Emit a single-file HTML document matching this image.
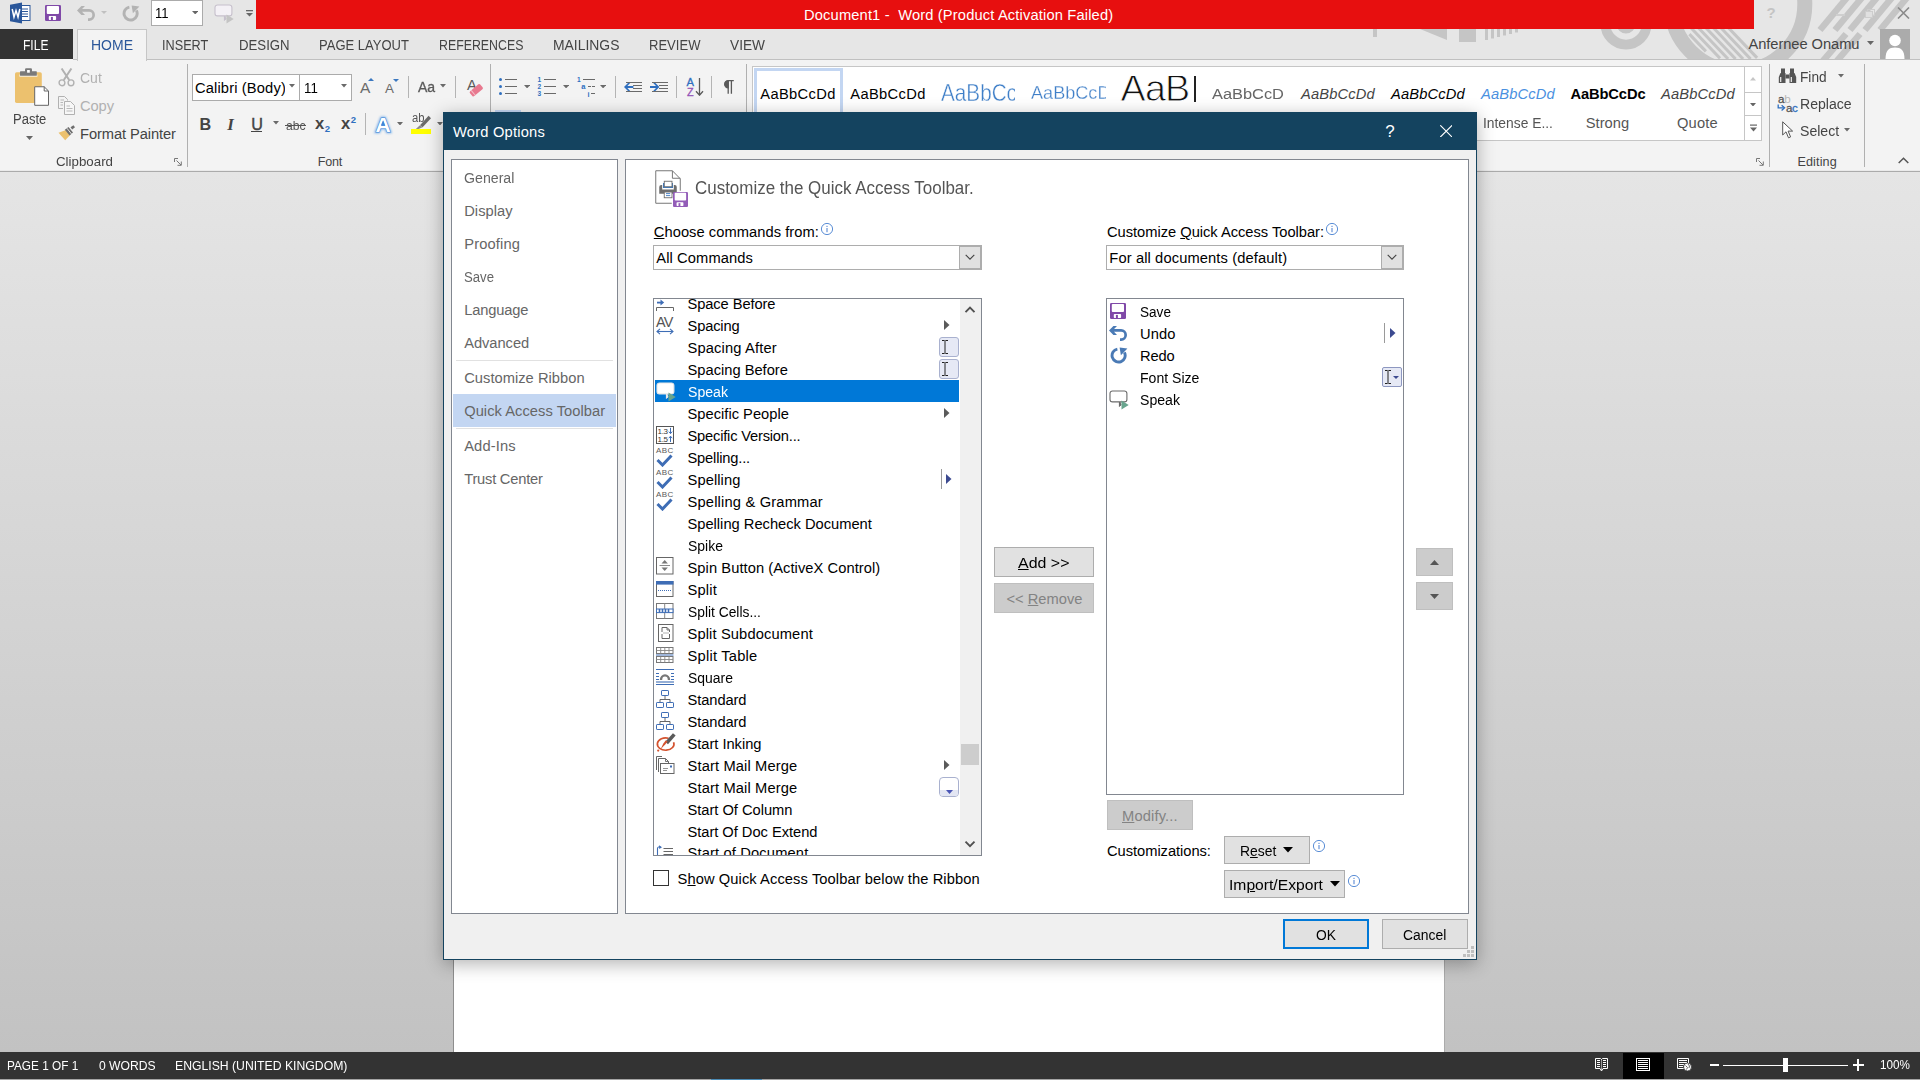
<!DOCTYPE html>
<html><head><meta charset="utf-8"><title>Word Options</title><style>
html,body{margin:0;padding:0;}
body{width:1920px;height:1080px;position:relative;overflow:hidden;background:#c6c6c6;font-family:"Liberation Sans",sans-serif;}
div,span.t,svg{position:absolute;}
span.t{line-height:1;white-space:pre;}
u{text-decoration:underline;text-underline-offset:1px;}
</style></head><body>
<div style="left:0px;top:0px;width:1920px;height:60px;background:#e6e6e6;"></div>
<svg style="left:0;top:0;" width="1920" height="59" viewBox="0 0 1920 59"><g fill="none" stroke="#c5c5c5"><circle cx="1626" cy="24" r="20.6" stroke-width="9.8"/><circle cx="1626" cy="24" r="7" stroke-width="5"/><circle cx="1738" cy="4.3" r="66.8" stroke-width="15"/></g><g stroke="#c5c5c5" stroke-width="3"><line x1="1689.4" y1="34.1" x2="1705.9" y2="51.4"/><line x1="1683.5" y1="20.0" x2="1720.0" y2="58.3"/><line x1="1691.0" y1="20.0" x2="1728.1" y2="59.0"/><line x1="1698.5" y1="20.0" x2="1735.6" y2="59.0"/><line x1="1706.0" y1="20.0" x2="1743.1" y2="59.0"/><line x1="1713.5" y1="20.0" x2="1750.6" y2="59.0"/><line x1="1721.0" y1="20.0" x2="1757.1" y2="57.9"/></g><g stroke="#c5c5c5" stroke-width="6.5"><line x1="1820" y1="30" x2="1850" y2="-6"/><line x1="1835" y1="30" x2="1865" y2="-6"/><line x1="1850" y1="30" x2="1880" y2="-6"/><line x1="1865" y1="30" x2="1895" y2="-6"/><line x1="1880" y1="30" x2="1910" y2="-6"/><line x1="1822" y1="62" x2="1846" y2="34"/><line x1="1836" y1="62" x2="1860" y2="34"/></g><g fill="#c5c5c5"><rect x="1373" y="28" width="4" height="9"/><path d="M1420 29H1447V40Z"/><rect x="1459" y="29" width="17" height="13"/><rect x="1485" y="29" width="3" height="11.0"/><rect x="1491" y="29" width="3" height="9.5"/><rect x="1497" y="29" width="3" height="8.0"/><rect x="1503" y="29" width="3" height="6.5"/><rect x="1509" y="29" width="3" height="5.0"/><rect x="1515" y="29" width="3" height="3.5"/></g></svg>
<div style="left:256px;top:0px;width:1498px;height:29px;background:#e70f0f;"></div>
<span class="t" style="left:804.00px;top:8.16px;font-size:14.7px;color:#fff;letter-spacing:0.148px;">Document1 -  Word (Product Activation Failed)</span>
<div style="left:73px;top:59px;width:1847px;height:1px;background:#c0c0c0;"></div>
<div style="left:0px;top:59px;width:73px;height:1px;background:#f3f3f3;"></div>
<div style="left:0px;top:60px;width:1920px;height:111px;background:#f3f3f3;"></div>
<div style="left:0px;top:172px;width:1920px;height:880px;background:linear-gradient(#e5e5e5,#c2c2c2);"></div>
<div style="left:0px;top:170px;width:1920px;height:1px;background:#eaeaea;"></div>
<div style="left:0px;top:171px;width:1920px;height:1px;background:#ababab;"></div>
<div style="left:0px;top:29px;width:73px;height:30px;background:#333;"></div>
<span class="t" style="left:23.30px;top:38.16px;font-size:14.7px;color:#fff;transform:scaleX(0.8214);transform-origin:0 0;">FILE</span>
<div style="left:77px;top:29px;width:70px;height:32px;background:#f3f3f3;border:1px solid #c6c6c6;box-sizing:border-box;border-bottom:none;"></div>
<span class="t" style="left:90.50px;top:38.16px;font-size:14.7px;color:#2b579a;transform:scaleX(0.9524);transform-origin:0 0;">HOME</span>
<span class="t" style="left:162.00px;top:38.16px;font-size:14.7px;color:#444;transform:scaleX(0.8631);transform-origin:0 0;">INSERT</span>
<span class="t" style="left:238.80px;top:38.16px;font-size:14.7px;color:#444;transform:scaleX(0.8996);transform-origin:0 0;">DESIGN</span>
<span class="t" style="left:319.30px;top:38.16px;font-size:14.7px;color:#444;transform:scaleX(0.8861);transform-origin:0 0;">PAGE LAYOUT</span>
<span class="t" style="left:439.30px;top:38.16px;font-size:14.7px;color:#444;transform:scaleX(0.8410);transform-origin:0 0;">REFERENCES</span>
<span class="t" style="left:553.00px;top:38.16px;font-size:14.7px;color:#444;transform:scaleX(0.9466);transform-origin:0 0;">MAILINGS</span>
<span class="t" style="left:649.30px;top:38.16px;font-size:14.7px;color:#444;transform:scaleX(0.8881);transform-origin:0 0;">REVIEW</span>
<span class="t" style="left:730.00px;top:38.16px;font-size:14.7px;color:#444;transform:scaleX(0.9316);transform-origin:0 0;">VIEW</span>
<span class="t" style="left:1748.50px;top:37.16px;font-size:14.7px;color:#444;letter-spacing:-0.068px;">Anfernee Onamu</span>
<svg style="left:1866.5px;top:41.0px;" width="7" height="4" viewBox="0 0 7 4"><path d="M0 0H7L3.5 4Z" fill="#666"/></svg>
<div style="left:1880px;top:29px;width:30px;height:30px;background:#ababab;"></div>
<svg style="left:1880px;top:30px;" width="30" height="29" viewBox="0 0 30 29"><circle cx="15" cy="10.5" r="5.8" fill="#fff"/><path d="M5.5 29C5.5 20 9 17.5 15 17.5S24.5 20 24.5 29Z" fill="#fff"/></svg>
<svg style="left:9px;top:2px;" width="22" height="22" viewBox="0 0 22 22"><rect x="9" y="3.5" width="12" height="15" fill="#fff" stroke="#2b579a" stroke-width="1"/><path d="M12 7H19M12 9.5H19M12 12H19M12 14.5H19" stroke="#2b579a" stroke-width="1"/><path d="M1 2.8L13 0.6V21.4L1 19.2Z" fill="#2b579a"/><path d="M3.2 7L5 15L7 8.6L9 15L10.8 7" stroke="#fff" stroke-width="1.5" fill="none"/></svg>
<svg style="left:45px;top:5px;" width="16" height="16" viewBox="0 0 16 16"><rect x="0" y="0" width="16" height="16" rx="1.2" fill="#8049a8"/><rect x="1.8" y="0.9" width="12.2" height="8.1" rx="0.9" fill="#fff"/><rect x="3.8" y="10.9" width="7.3" height="4.1" rx="0.8" fill="#fff"/><rect x="5.9" y="11.9" width="2" height="4.1" fill="#8049a8"/></svg>
<svg style="left:77px;top:6px;" width="18" height="15" viewBox="0 0 18 15"><path d="M5 4.45H12.1A4.55 4.55 0 0 1 12.1 13.55H11" stroke="#b3b3b3" stroke-width="2.7" fill="none"/><path d="M0 4.45L4.4 0H8L5 3.1V5.8L8 8.9H4.4Z" fill="#b3b3b3"/></svg>
<svg style="left:101.3px;top:10.8px;" width="6" height="3" viewBox="0 0 6 3"><path d="M0 0H6L3.0 3Z" fill="#c0c0c0"/></svg>
<svg style="left:122px;top:4.5px;" width="18" height="17" viewBox="0 0 18 17"><path d="M7.36 2.05A6.55 6.55 0 1 0 14.4 5.4" stroke="#b3b3b3" stroke-width="2.9" fill="none"/><path d="M9.6 0.6L17.4 1.5L10.9 8.2Z" fill="#b3b3b3"/></svg>
<div style="left:151px;top:0px;width:52px;height:26px;background:#fff;border:1px solid #ababab;box-sizing:border-box;"></div>
<span class="t" style="left:155.00px;top:6.26px;font-size:14.7px;color:#000;transform:scaleX(0.8912);transform-origin:0 0;">11</span>
<svg style="left:191.8px;top:10.9px;" width="6.4" height="3.4" viewBox="0 0 6.4 3.4"><path d="M0 0H6.4L3.2 3.4Z" fill="#666"/></svg>
<svg style="left:213.5px;top:3.5px;" width="20" height="20" viewBox="0 0 20 20"><path d="M3.5 1H15.4A2.5 2.5 0 0 1 17.9 3.5V9.4A2.5 2.5 0 0 1 15.4 11.9H10.5V15.8L11.9 14.7L10.5 11.9H3.5A2.5 2.5 0 0 1 1 9.4V3.5A2.5 2.5 0 0 1 3.5 1Z" fill="#f4f1f6" stroke="#c6c0cc" stroke-width="1.1"/><path d="M10.5 11.9V15.8L11.9 14.9" fill="none" stroke="#c6c0cc" stroke-width="1.1"/><path d="M12.5 10.4L19.7 15L12.5 19.6Z" fill="#c4c4c4"/></svg>
<svg style="left:246px;top:9px;" width="7" height="8" viewBox="0 0 7 8"><rect x="0" y="1" width="7" height="1.3" fill="#666"/><path d="M0 4H7L3.5 7.5Z" fill="#666"/></svg>
<span class="t" style="left:1766.50px;top:5.30px;font-size:15px;color:#c4c4c4;font-weight:bold;">?</span>
<div style="left:1836px;top:14px;width:9px;height:1.5px;background:#cfcfcf;"></div>
<div style="left:1867px;top:9px;width:8px;height:7px;border:1.5px solid #cdcdcd;box-sizing:border-box;"></div>
<div style="left:1865px;top:11px;width:8px;height:7px;background:#e0e0e0;border:1.5px solid #cdcdcd;box-sizing:border-box;"></div>
<svg style="left:1897px;top:7px;" width="13" height="12" viewBox="0 0 13 12"><path d="M1 0.5L12 11.5M12 0.5L1 11.5" stroke="#8a8a8a" stroke-width="1.6" fill="none"/></svg>
<div style="left:187px;top:64px;width:1px;height:103px;background:#b0b0b0;"></div>
<div style="left:490px;top:64px;width:1px;height:103px;background:#b0b0b0;"></div>
<div style="left:746px;top:64px;width:1px;height:103px;background:#b0b0b0;"></div>
<div style="left:1769px;top:64px;width:1px;height:103px;background:#b0b0b0;"></div>
<div style="left:1864px;top:64px;width:1px;height:103px;background:#b0b0b0;"></div>
<svg style="left:14px;top:68px;" width="36" height="39" viewBox="0 0 36 39"><rect x="1" y="4.3" width="26.8" height="30.6" rx="1.6" fill="#ecc16e"/><rect x="5.4" y="6.5" width="18" height="2.2" fill="#f8f3e8"/><rect x="6" y="3.25" width="16.8" height="4.6" rx="0.6" fill="#7a7a7a"/><rect x="11" y="0.2" width="7" height="5" rx="1.2" fill="#7a7a7a"/><rect x="13.1" y="2" width="2.7" height="2.7" fill="#fff"/><path d="M20.7 18.75H30.2L34.5 23V37.3H20.7Z" fill="#fff" stroke="#666" stroke-width="1"/><path d="M30.2 18.75V23H34.5" fill="none" stroke="#666" stroke-width="1"/></svg>
<span class="t" style="left:12.50px;top:111.91px;font-size:14.7px;color:#444;transform:scaleX(0.8859);transform-origin:0 0;">Paste</span>
<svg style="left:25.5px;top:135.5px;" width="7" height="4" viewBox="0 0 7 4"><path d="M0 0H7L3.5 4Z" fill="#666"/></svg>
<svg style="left:58px;top:68px;" width="17" height="19" viewBox="0 0 17 19"><path d="M3.6 0.5L11.2 12M13.4 0.5L5.8 12" stroke="#b1b1b1" stroke-width="2" fill="none"/><circle cx="4" cy="14.8" r="2.9" fill="none" stroke="#b1b1b1" stroke-width="1.4"/><circle cx="13" cy="14.8" r="2.9" fill="none" stroke="#b1b1b1" stroke-width="1.4"/></svg>
<span class="t" style="left:80.00px;top:71.16px;font-size:14.7px;color:#b1b1b1;transform:scaleX(0.9530);transform-origin:0 0;">Cut</span>
<svg style="left:58px;top:96px;" width="18" height="19" viewBox="0 0 18 19"><path d="M0.5 0.5H6.5L9.5 3.5V4.5M0.5 0.5V12.5H5" fill="none" stroke="#b1b1b1" stroke-width="1"/><path d="M6.5 5.5H12.5L16.5 9.5V18.5H6.5Z" fill="#f7f7f7" stroke="#b1b1b1" stroke-width="1"/><path d="M8.5 10H12M8.5 12.5H14.5M8.5 15H14.5M2.5 4H6M2.5 6.5H5M2.5 9H5" stroke="#b1b1b1" stroke-width="0.9"/></svg>
<span class="t" style="left:80.00px;top:99.41px;font-size:14.7px;color:#b1b1b1;letter-spacing:-0.079px;">Copy</span>
<svg style="left:57px;top:124px;" width="20" height="18" viewBox="0 0 20 18"><path d="M1.5 8.7L8.4 6.2L13.2 11L8.2 16.2Z" fill="#ecc16e"/><path d="M7.8 5.8L11.5 3L16 8.6L12.6 11.4Z" fill="#6e6e6e"/><path d="M9.9 4.2L14.5 10" stroke="#f1f1f1" stroke-width="0.9"/><path d="M13.5 3.3L16.4 1.2L18 3.2L15.2 5.4Z" fill="#6e6e6e"/></svg>
<span class="t" style="left:80.00px;top:127.16px;font-size:14.7px;color:#444;letter-spacing:-0.087px;">Format Painter</span>
<span class="t" style="left:55.60px;top:155.63px;font-size:12.6px;color:#444;transform:scaleX(1.0568);transform-origin:0 0;">Clipboard</span>
<svg style="left:174px;top:158px;" width="8" height="8" viewBox="0 0 8 8"><path d="M0.5 4V0.5H4" stroke="#777" fill="none" stroke-width="1"/><path d="M2.5 2.5L7 7M7.3 3.5V7.3H3.5" stroke="#777" fill="none" stroke-width="1"/></svg>
<div style="left:192px;top:74px;width:108px;height:27px;background:#fff;border:1px solid #ababab;box-sizing:border-box;"></div>
<div style="left:299px;top:74px;width:53px;height:27px;background:#fff;border:1px solid #ababab;box-sizing:border-box;"></div>
<div style="left:193px;top:75px;width:92px;height:25px;overflow:hidden;">
<span class="t" style="left:2.00px;top:6.41px;font-size:14.7px;color:#000;letter-spacing:0.140px;">Calibri (Body)</span>
</div>
<svg style="left:288.8px;top:84.25px;" width="6" height="3.5" viewBox="0 0 6 3.5"><path d="M0 0H6L3.0 3.5Z" fill="#6a6a6a"/></svg>
<span class="t" style="left:304.00px;top:81.41px;font-size:14.7px;color:#000;transform:scaleX(0.9043);transform-origin:0 0;">11</span>
<svg style="left:340.8px;top:84.25px;" width="6" height="3.5" viewBox="0 0 6 3.5"><path d="M0 0H6L3.0 3.5Z" fill="#6a6a6a"/></svg>
<span class="t" style="left:360.00px;top:80.48px;font-size:15.5px;color:#6a6a6a;">A</span>
<svg style="left:368px;top:78px;" width="6" height="3" viewBox="0 0 6 3"><path d="M0 3H6L3 0Z" fill="#3b78c0"/></svg>
<span class="t" style="left:385.00px;top:82.26px;font-size:13.4px;color:#6a6a6a;">A</span>
<svg style="left:393.2px;top:79px;" width="6" height="3" viewBox="0 0 6 3"><path d="M0 0H6L3 3Z" fill="#3b78c0"/></svg>
<div style="left:408px;top:76px;width:1px;height:22px;background:#b4b4b4;"></div>
<span class="t" style="left:417.70px;top:79.69px;font-size:14.9px;color:#5a5a5a;transform:scaleX(0.9437);transform-origin:0 0;-webkit-text-stroke:0.3px #5a5a5a;">Aa</span>
<svg style="left:439.5px;top:84.25px;" width="6" height="3.5" viewBox="0 0 6 3.5"><path d="M0 0H6L3.0 3.5Z" fill="#6a6a6a"/></svg>
<div style="left:455px;top:76px;width:1px;height:22px;background:#b4b4b4;"></div>
<span class="t" style="left:467.00px;top:77.54px;font-size:14.6px;color:#5a5a5a;">A</span>
<svg style="left:468px;top:82px;" width="16" height="16" viewBox="0 0 16 16"><g transform="rotate(-40 8.3 8.2)"><rect x="1.6" y="5" width="13.4" height="6.4" rx="1.4" fill="#e8798f"/><rect x="3.8" y="5" width="0.9" height="6.4" fill="#f6c4cd"/></g></svg>
<span class="t" style="left:199.60px;top:116.49px;font-size:16.2px;color:#444;font-weight:bold;">B</span>
<span class="t" style="left:227.20px;top:115.96px;font-size:17px;color:#444;font-weight:bold;font-style:italic;font-family:'Liberation Serif',serif;">I</span>
<span class="t" style="left:251.30px;top:116.49px;font-size:16.2px;color:#444;-webkit-text-stroke:0.4px #444;">U</span>
<div style="left:251px;top:131.2px;width:11px;height:1.3px;background:#444;"></div>
<svg style="left:272.5px;top:121.25px;" width="6" height="3.5" viewBox="0 0 6 3.5"><path d="M0 0H6L3.0 3.5Z" fill="#6a6a6a"/></svg>
<span class="t" style="left:286.00px;top:119.00px;font-size:13px;color:#555;transform:scaleX(0.9351);transform-origin:0 0;">abc</span>
<div style="left:285.3px;top:125px;width:21.2px;height:1.1px;background:#555;"></div>
<span class="t" style="left:315.00px;top:116.15px;font-size:16.6px;color:#444;font-weight:bold;">x</span>
<span class="t" style="left:324.80px;top:124.27px;font-size:9.6px;color:#2f6fbf;font-weight:bold;">2</span>
<span class="t" style="left:341.00px;top:116.15px;font-size:16.6px;color:#444;font-weight:bold;">x</span>
<span class="t" style="left:350.80px;top:115.47px;font-size:9.6px;color:#2f6fbf;font-weight:bold;">2</span>
<div style="left:365px;top:113px;width:1px;height:22px;background:#b4b4b4;"></div>
<svg style="left:372px;top:112px;" width="22" height="24" viewBox="0 0 22 24"><text x="11" y="19.5" text-anchor="middle" font-family="Liberation Sans,sans-serif" font-weight="bold" font-size="21" fill="none" stroke="#7fb2ea" stroke-width="2.6" style="filter:blur(0.9px)">A</text><text x="11" y="19.5" text-anchor="middle" font-family="Liberation Sans,sans-serif" font-weight="bold" font-size="21" fill="#fff" stroke="#3f86d8" stroke-width="1.1" paint-order="stroke">A</text><path d="M11 8.5L13.1 13.6H8.9Z" fill="#3f86d8"/></svg>
<svg style="left:397.0px;top:121.75px;" width="6" height="3.5" viewBox="0 0 6 3.5"><path d="M0 0H6L3.0 3.5Z" fill="#6a6a6a"/></svg>
<span class="t" style="left:411.50px;top:112.44px;font-size:12px;color:#555;transform:scaleX(0.9365);transform-origin:0 0;">ab</span>
<svg style="left:414px;top:115px;" width="18" height="15" viewBox="0 0 18 15"><path d="M14.6 0.8L17 3.2L8.6 12.2L6.2 10Z" fill="#6a6a6a"/><path d="M6.2 10L8.6 12.2L4.6 14L1.6 14.2Z" fill="#8a8a8a"/></svg>
<div style="left:411px;top:129px;width:20.2px;height:5px;background:#ffff00;"></div>
<svg style="left:437.0px;top:121.75px;" width="6" height="3.5" viewBox="0 0 6 3.5"><path d="M0 0H6L3.0 3.5Z" fill="#6a6a6a"/></svg>
<span class="t" style="left:317.70px;top:155.63px;font-size:12.6px;color:#444;letter-spacing:-0.203px;">Font</span>
<svg style="left:498.9px;top:78px;" width="3" height="3" viewBox="0 0 3 3"><circle cx="1.5" cy="1.5" r="1.5" fill="#2f6fbf"/></svg>
<div style="left:505px;top:79px;width:12px;height:1px;background:#6a6a6a;"></div>
<svg style="left:498.9px;top:85px;" width="3" height="3" viewBox="0 0 3 3"><circle cx="1.5" cy="1.5" r="1.5" fill="#2f6fbf"/></svg>
<div style="left:505px;top:86px;width:12px;height:1px;background:#6a6a6a;"></div>
<svg style="left:498.9px;top:92px;" width="3" height="3" viewBox="0 0 3 3"><circle cx="1.5" cy="1.5" r="1.5" fill="#2f6fbf"/></svg>
<div style="left:505px;top:93px;width:12px;height:1px;background:#6a6a6a;"></div>
<svg style="left:523.9px;top:85.0px;" width="6.2" height="3.4" viewBox="0 0 6.2 3.4"><path d="M0 0H6.2L3.1 3.4Z" fill="#6a6a6a"/></svg>
<span class="t" style="left:537.60px;top:77.01px;font-size:6.6px;color:#2f6fbf;font-weight:bold;">1</span>
<div style="left:544px;top:79px;width:12px;height:1px;background:#6a6a6a;"></div>
<span class="t" style="left:537.60px;top:84.01px;font-size:6.6px;color:#2f6fbf;font-weight:bold;">2</span>
<div style="left:544px;top:86px;width:12px;height:1px;background:#6a6a6a;"></div>
<span class="t" style="left:537.60px;top:91.01px;font-size:6.6px;color:#2f6fbf;font-weight:bold;">3</span>
<div style="left:544px;top:93px;width:12px;height:1px;background:#6a6a6a;"></div>
<svg style="left:562.9px;top:85.0px;" width="6.2" height="3.4" viewBox="0 0 6.2 3.4"><path d="M0 0H6.2L3.1 3.4Z" fill="#6a6a6a"/></svg>
<span class="t" style="left:577.00px;top:77.21px;font-size:6.6px;color:#2f6fbf;font-weight:bold;">1</span>
<div style="left:583px;top:79px;width:12px;height:1px;background:#6a6a6a;"></div>
<span class="t" style="left:581.20px;top:83.37px;font-size:7.6px;color:#2f6fbf;font-weight:bold;">a</span>
<div style="left:588px;top:86px;width:3px;height:1px;background:#6a6a6a;"></div>
<div style="left:592px;top:86px;width:3px;height:1px;background:#6a6a6a;"></div>
<span class="t" style="left:587.60px;top:90.71px;font-size:7.2px;color:#2f6fbf;font-weight:bold;">i</span>
<div style="left:591px;top:93px;width:4px;height:1px;background:#6a6a6a;"></div>
<svg style="left:599.9px;top:85.0px;" width="6.2" height="3.4" viewBox="0 0 6.2 3.4"><path d="M0 0H6.2L3.1 3.4Z" fill="#6a6a6a"/></svg>
<div style="left:615px;top:76px;width:1px;height:22px;background:#b4b4b4;"></div>
<div style="left:626px;top:82px;width:16px;height:1px;background:#6a6a6a;"></div>
<div style="left:633px;top:85px;width:9px;height:1px;background:#6a6a6a;"></div>
<div style="left:633px;top:88px;width:9px;height:1px;background:#6a6a6a;"></div>
<div style="left:626px;top:91px;width:16px;height:1px;background:#6a6a6a;"></div>
<svg style="left:624px;top:83px;" width="10" height="8" viewBox="0 0 10 8"><path d="M0 4L4 0H6.2L3.4 3H9.4V5H3.4L6.2 8H4Z" fill="#2f6fbf"/></svg>
<div style="left:652px;top:82px;width:16px;height:1px;background:#6a6a6a;"></div>
<div style="left:659px;top:85px;width:9px;height:1px;background:#6a6a6a;"></div>
<div style="left:659px;top:88px;width:9px;height:1px;background:#6a6a6a;"></div>
<div style="left:652px;top:91px;width:16px;height:1px;background:#6a6a6a;"></div>
<svg style="left:650px;top:83px;" width="10" height="8" viewBox="0 0 10 8"><path d="M9.4 4L5.4 0H3.2L6 3H0V5H6L3.2 8H5.4Z" fill="#2f6fbf"/></svg>
<div style="left:676px;top:76px;width:1px;height:22px;background:#b4b4b4;"></div>
<span class="t" style="left:686.60px;top:77.42px;font-size:11.2px;color:#2f6fbf;-webkit-text-stroke:0.3px #2f6fbf;">A</span>
<span class="t" style="left:687.00px;top:87.26px;font-size:10.8px;color:#9353b8;-webkit-text-stroke:0.3px #9353b8;">Z</span>
<svg style="left:695px;top:78px;" width="9" height="18" viewBox="0 0 9 18"><path d="M4.5 0V17M1 13.2L4.5 17.2L8 13.2" stroke="#5a5a5a" stroke-width="1.3" fill="none"/></svg>
<div style="left:711px;top:76px;width:1px;height:22px;background:#b4b4b4;"></div>
<svg style="left:722px;top:80px;" width="12" height="14" viewBox="0 0 12 14"><path d="M6.4 0.6H11.8M6.2 0.6A3.6 3.6 0 0 0 6.2 7.8Z" fill="#5a5a5a" stroke="#5a5a5a" stroke-width="1.2"/><path d="M6.2 0.6V13.8M9.4 0.6V13.8" stroke="#5a5a5a" stroke-width="1.3" fill="none"/></svg>
<div style="left:495px;top:110px;width:26px;height:2px;background:#c3d6f2;"></div>
<div style="left:752px;top:66px;width:1010px;height:75px;background:#fff;border:1px solid #c6c6c6;box-sizing:border-box;"></div>
<div style="left:754px;top:68px;width:89px;height:73px;background:#fff;border:3px solid #c3d6f2;box-sizing:border-box;"></div>
<span class="t" style="left:760.25px;top:86.91px;font-size:14.7px;color:#000;letter-spacing:0.347px;">AaBbCcDd</span>
<span class="t" style="left:850.25px;top:86.91px;font-size:14.7px;color:#000;letter-spacing:0.347px;">AaBbCcDd</span>
<span class="t" style="left:1211.50px;top:86.48px;font-size:15.2px;color:#666;transform:scaleX(1.0788);transform-origin:0 0;">AaBbCcD</span>
<span class="t" style="left:1301.00px;top:86.91px;font-size:14.7px;color:#444;letter-spacing:0.160px;font-style:italic;">AaBbCcDd</span>
<span class="t" style="left:1391.00px;top:86.91px;font-size:14.7px;color:#000;letter-spacing:0.160px;font-style:italic;">AaBbCcDd</span>
<span class="t" style="left:1481.00px;top:86.91px;font-size:14.7px;color:#4a90e0;letter-spacing:0.160px;font-style:italic;">AaBbCcDd</span>
<span class="t" style="left:1570.50px;top:86.91px;font-size:14.7px;color:#000;letter-spacing:-0.121px;font-weight:bold;">AaBbCcDc</span>
<span class="t" style="left:1661.00px;top:86.91px;font-size:14.7px;color:#444;letter-spacing:0.160px;font-style:italic;">AaBbCcDd</span>
<div style="left:933px;top:67px;width:82px;height:44px;overflow:hidden;">
<span class="t" style="left:8.20px;top:15.29px;font-size:23.4px;color:#3f7fc8;transform:scaleX(0.8853);transform-origin:0 0;-webkit-text-stroke:0.4px #fff;">AaBbCc</span>
</div>
<div style="left:1023px;top:67px;width:82.5px;height:44px;overflow:hidden;">
<span class="t" style="left:8.00px;top:17.20px;font-size:18.9px;color:#3f7fc8;transform:scaleX(0.9580);transform-origin:0 0;-webkit-text-stroke:0.3px #fff;">AaBbCcD</span>
</div>
<div style="left:1113px;top:76px;width:77px;height:35px;overflow:hidden;">
<span class="t" style="left:7.50px;top:-5.81px;font-size:37.7px;color:#111;letter-spacing:-0.754px;-webkit-text-stroke:0.9px #fff;">AaB</span>
</div>
<div style="left:1194px;top:76px;width:1.5px;height:26px;background:#222;"></div>
<span class="t" style="left:1482.50px;top:116.16px;font-size:14.7px;color:#555;transform:scaleX(0.9413);transform-origin:0 0;">Intense E...</span>
<span class="t" style="left:1585.75px;top:116.16px;font-size:14.7px;color:#555;letter-spacing:0.031px;">Strong</span>
<span class="t" style="left:1677.00px;top:116.16px;font-size:14.7px;color:#555;letter-spacing:0.191px;">Quote</span>
<div style="left:1744px;top:67px;width:1px;height:73px;background:#c6c6c6;"></div>
<div style="left:1744px;top:92px;width:17px;height:1px;background:#c6c6c6;"></div>
<div style="left:1744px;top:115px;width:17px;height:1px;background:#c6c6c6;"></div>
<svg style="left:1750px;top:77px;" width="6" height="4" viewBox="0 0 6 4"><path d="M0 3.5H6L3 0Z" fill="#c6c6c6"/></svg>
<svg style="left:1750.0px;top:102.75px;" width="6" height="3.5" viewBox="0 0 6 3.5"><path d="M0 0H6L3.0 3.5Z" fill="#666"/></svg>
<svg style="left:1749.5px;top:124px;" width="7" height="8" viewBox="0 0 7 8"><rect x="0" y="0.5" width="7" height="1.2" fill="#666"/><path d="M0 3.5H7L3.5 7.5Z" fill="#666"/></svg>
<svg style="left:1756px;top:158px;" width="8" height="8" viewBox="0 0 8 8"><path d="M0.5 4V0.5H4" stroke="#777" fill="none" stroke-width="1"/><path d="M2.5 2.5L7 7M7.3 3.5V7.3H3.5" stroke="#777" fill="none" stroke-width="1"/></svg>
<svg style="left:1778px;top:68px;" width="19" height="16" viewBox="0 0 19 16"><path d="M2.5 5H7.5V15H0.8V9Z" fill="#555"/><path d="M11.5 5H16.5L18.2 9V15H11.5Z" fill="#555"/><rect x="3" y="0.5" width="4" height="5" fill="#555"/><rect x="12" y="0.5" width="4" height="5" fill="#555"/><rect x="7.5" y="6.5" width="4" height="4" fill="#555"/><rect x="2.1" y="9" width="1.2" height="5" fill="#f1f1f1"/><rect x="12.7" y="9" width="1.2" height="5" fill="#f1f1f1"/></svg>
<span class="t" style="left:1799.80px;top:70.16px;font-size:14.7px;color:#444;transform:scaleX(0.9302);transform-origin:0 0;">Find</span>
<svg style="left:1837.8px;top:74.25px;" width="6" height="3.5" viewBox="0 0 6 3.5"><path d="M0 0H6L3.0 3.5Z" fill="#6a6a6a"/></svg>
<span class="t" style="left:1778.00px;top:93.38px;font-size:11.6px;color:#555;-webkit-text-stroke:0.3px #555;">a</span>
<span class="t" style="left:1784.20px;top:93.38px;font-size:11.6px;color:#b8b8b8;">b</span>
<span class="t" style="left:1786.00px;top:102.48px;font-size:11.6px;color:#555;-webkit-text-stroke:0.3px #555;">a</span>
<span class="t" style="left:1792.00px;top:102.48px;font-size:11.6px;color:#2f6fbf;-webkit-text-stroke:0.3px #2f6fbf;">c</span>
<svg style="left:1776.6px;top:104px;" width="9" height="8" viewBox="0 0 9 8"><path d="M1.2 0.4V3.8H6.8" stroke="#2f6fbf" stroke-width="1.3" fill="none"/><path d="M4.6 1.2L7.6 3.8L4.6 6.4" stroke="#2f6fbf" stroke-width="1.3" fill="none"/></svg>
<span class="t" style="left:1799.80px;top:97.41px;font-size:14.7px;color:#444;transform:scaleX(0.9586);transform-origin:0 0;">Replace</span>
<svg style="left:1781.5px;top:121px;" width="12" height="18" viewBox="0 0 12 18"><path d="M0.7 0.8V14L4 10.8L6.5 16.8L8.6 15.9L6.1 10.1H10.6Z" fill="#fff" stroke="#555" stroke-width="1"/></svg>
<span class="t" style="left:1799.80px;top:123.91px;font-size:14.7px;color:#444;transform:scaleX(0.9594);transform-origin:0 0;">Select</span>
<svg style="left:1844.0px;top:128.25px;" width="6" height="3.5" viewBox="0 0 6 3.5"><path d="M0 0H6L3.0 3.5Z" fill="#6a6a6a"/></svg>
<span class="t" style="left:1797.50px;top:155.63px;font-size:12.6px;color:#444;letter-spacing:0.110px;">Editing</span>
<svg style="left:1898px;top:157px;" width="11" height="7" viewBox="0 0 11 7"><path d="M0.7 6L5.5 1.2L10.3 6" stroke="#555" stroke-width="1.5" fill="none"/></svg>
<div style="left:453px;top:172px;width:992px;height:880px;background:#fff;"></div>
<div style="left:453px;top:172px;width:1px;height:880px;background:#8e8e8e;"></div>
<div style="left:1444px;top:172px;width:1px;height:880px;background:#ababab;"></div>
<div style="left:0px;top:1052px;width:1920px;height:27px;background:#333;"></div>
<div style="left:0px;top:1079px;width:1920px;height:1px;background:#a5a5a5;"></div>
<div style="left:711px;top:1079px;width:51px;height:1px;background:#4b8bb5;"></div>
<span class="t" style="left:7.00px;top:1059.68px;font-size:12.9px;color:#fff;transform:scaleX(0.9152);transform-origin:0 0;">PAGE 1 OF 1</span>
<span class="t" style="left:98.80px;top:1059.68px;font-size:12.9px;color:#fff;transform:scaleX(0.9418);transform-origin:0 0;">0 WORDS</span>
<span class="t" style="left:175.00px;top:1059.68px;font-size:12.9px;color:#fff;transform:scaleX(0.9476);transform-origin:0 0;">ENGLISH (UNITED KINGDOM)</span>
<span class="t" style="left:1879.70px;top:1059.28px;font-size:12.9px;color:#fff;transform:scaleX(0.9093);transform-origin:0 0;">100%</span>
<svg style="left:1595px;top:1058px;" width="13" height="14" viewBox="0 0 13 14"><path d="M0.5 0.5H5.5L6.5 1.5L7.5 0.5H12.5V10.5H8L6.5 13L5 10.5H0.5Z" fill="none" stroke="#fff" stroke-width="1"/><rect x="2" y="2" width="3" height="1" fill="#fff"/><rect x="8" y="2" width="3" height="1" fill="#fff"/><rect x="2" y="4" width="3" height="1" fill="#fff"/><rect x="8" y="4" width="3" height="1" fill="#fff"/><rect x="2" y="6" width="3" height="1" fill="#fff"/><rect x="8" y="6" width="3" height="1" fill="#fff"/><rect x="2" y="8" width="3" height="1" fill="#fff"/><rect x="8" y="8" width="3" height="1" fill="#fff"/><path d="M6.5 1.5V12" stroke="#fff" stroke-width="1" stroke-dasharray="1 1"/></svg>
<div style="left:1623px;top:1053px;width:41px;height:26px;background:#000;"></div>
<svg style="left:1636px;top:1058px;" width="14" height="13" viewBox="0 0 14 13"><rect x="0.5" y="0.5" width="13" height="12" fill="none" stroke="#fff" stroke-width="1"/><rect x="2" y="2" width="10" height="1" fill="#fff"/><rect x="2" y="4" width="10" height="1" fill="#fff"/><rect x="2" y="6" width="10" height="1" fill="#fff"/><rect x="2" y="8" width="10" height="1" fill="#fff"/><rect x="2" y="10" width="10" height="1" fill="#fff"/></svg>
<svg style="left:1676.5px;top:1058px;" width="16" height="14" viewBox="0 0 16 14"><path d="M7 10.5H0.5V0.5H11.5V5" fill="none" stroke="#fff" stroke-width="1"/><rect x="2" y="2" width="8" height="1" fill="#fff"/><rect x="2" y="4" width="8" height="1" fill="#fff"/><rect x="2" y="6" width="5" height="1" fill="#fff"/><rect x="2" y="8" width="4" height="1" fill="#fff"/><circle cx="10.5" cy="9" r="4" fill="#fff" stroke="#333" stroke-width="0.8"/><path d="M8.5 7.5L10.5 9.5L9.5 11.5M11 6L12.5 8L12 10" stroke="#555" stroke-width="0.9" fill="none"/></svg>
<div style="left:1710px;top:1064px;width:9px;height:2px;background:#fff;"></div>
<div style="left:1723px;top:1065px;width:125px;height:1px;background:#fff;"></div>
<div style="left:1783px;top:1058px;width:5px;height:14px;background:#fff;"></div>
<div style="left:1852.5px;top:1064px;width:11.5px;height:2px;background:#fff;"></div>
<div style="left:1857.3px;top:1059px;width:2px;height:12px;background:#fff;"></div>
<div style="left:443px;top:112px;width:1034px;height:848px;background:#f0f0f0;border:1px solid #14435f;box-sizing:border-box;box-shadow:0 4px 17px 0 rgba(0,0,0,0.30);"></div>
<div style="left:443px;top:112px;width:1034px;height:38px;background:#14435f;"></div>
<span class="t" style="left:453.00px;top:124.76px;font-size:14.7px;color:#fff;letter-spacing:0.200px;">Word Options</span>
<span class="t" style="left:1385.30px;top:123.01px;font-size:17px;color:#fff;">?</span>
<svg style="left:1440px;top:124.8px;" width="12.4" height="12.4" viewBox="0 0 12.4 12.4"><path d="M0.3 0.3L12.1 12.1M12.1 0.3L0.3 12.1" stroke="#fff" stroke-width="1.1" fill="none"/></svg>
<div style="left:451px;top:159px;width:167px;height:755px;background:#fff;border:1px solid #828790;box-sizing:border-box;"></div>
<div style="left:453px;top:394px;width:163px;height:33px;background:#c3d6f2;"></div>
<div style="left:456px;top:360px;width:157px;height:1px;background:#e1e1e1;"></div>
<div style="left:456px;top:428px;width:157px;height:1px;background:#e1e1e1;"></div>
<span class="t" style="left:464.20px;top:170.66px;font-size:14.7px;color:#666;transform:scaleX(0.9637);transform-origin:0 0;">General</span>
<span class="t" style="left:464.20px;top:203.76px;font-size:14.7px;color:#666;letter-spacing:0.043px;">Display</span>
<span class="t" style="left:464.20px;top:236.91px;font-size:14.7px;color:#666;letter-spacing:0.156px;">Proofing</span>
<span class="t" style="left:464.20px;top:269.91px;font-size:14.7px;color:#666;transform:scaleX(0.8953);transform-origin:0 0;">Save</span>
<span class="t" style="left:464.20px;top:303.16px;font-size:14.7px;color:#666;letter-spacing:-0.176px;">Language</span>
<span class="t" style="left:464.20px;top:335.66px;font-size:14.7px;color:#666;letter-spacing:-0.048px;">Advanced</span>
<span class="t" style="left:464.20px;top:370.91px;font-size:14.7px;color:#666;letter-spacing:0.024px;">Customize Ribbon</span>
<span class="t" style="left:464.20px;top:404.41px;font-size:14.7px;color:#666;letter-spacing:0.037px;">Quick Access Toolbar</span>
<span class="t" style="left:464.20px;top:438.91px;font-size:14.7px;color:#666;letter-spacing:0.120px;">Add-Ins</span>
<span class="t" style="left:464.20px;top:471.91px;font-size:14.7px;color:#666;letter-spacing:-0.221px;">Trust Center</span>
<div style="left:625px;top:159px;width:844px;height:755px;background:#fff;border:1px solid #828790;box-sizing:border-box;"></div>
<svg style="left:654px;top:170px;" width="36" height="38" viewBox="0 0 36 38"><path d="M26.25 20.75V8.75L18.4 0.75H1.75V33.25H17.75" fill="#fff" stroke="#777" stroke-width="1"/><path d="M18.4 0.75V8.25H26.25" fill="none" stroke="#777" stroke-width="1"/><path d="M7.25 15H8.2V19.4H19.8V15H20.75A2 2 0 0 1 22.75 17V23.75H5.25V17A2 2 0 0 1 7.25 15Z" fill="#6e6e6e"/><rect x="9" y="13" width="10" height="5" fill="#3b78c0"/><rect x="10.25" y="11.25" width="7.75" height="5.5" fill="#fff" stroke="#6e6e6e" stroke-width="0.9"/><rect x="10.25" y="22" width="7.75" height="5.75" fill="#fff" stroke="#6e6e6e" stroke-width="0.9"/><path d="M12 23.6H16.2M12 25.6H16.2" stroke="#3b78c0" stroke-width="0.9"/><g transform="translate(19,22) scale(0.9375)"><rect x="0" y="0" width="16" height="16" rx="1.2" fill="#935db8"/><rect x="1.8" y="0.9" width="12.2" height="8.1" rx="0.9" fill="#fff"/><rect x="3.8" y="10.9" width="7.3" height="4.1" rx="0.8" fill="#fff"/><rect x="5.9" y="11.9" width="2" height="4.1" fill="#935db8"/></g></svg>
<span class="t" style="left:694.50px;top:179.36px;font-size:18.3px;color:#555;transform:scaleX(0.9277);transform-origin:0 0;">Customize the Quick Access Toolbar.</span>
<span class="t" style="left:653.80px;top:225.16px;font-size:14.7px;color:#000;letter-spacing:0.047px;"><u>C</u>hoose commands from:</span>
<svg style="left:819.75px;top:221.8px;" width="14" height="14" viewBox="0 0 14 14"><circle cx="7" cy="7" r="5.6" fill="#fff" stroke="#5b8ed6" stroke-width="1"/><rect x="6.5" y="6" width="1" height="4.2" fill="#4a7fd0"/><rect x="6.5" y="3.8" width="1" height="1.2" fill="#4a7fd0"/></svg>
<div style="left:653px;top:245px;width:329px;height:25px;background:#fff;border:1px solid #adadad;box-sizing:border-box;"></div>
<div style="left:959px;top:246px;width:22px;height:23px;background:#e1e1e1;border:1px solid #adadad;box-sizing:border-box;"></div>
<svg style="left:965px;top:254px;" width="10" height="7" viewBox="0 0 10 7"><path d="M0.7 0.8L5 5.2L9.3 0.8" stroke="#444" stroke-width="1.1" fill="none"/></svg>
<span class="t" style="left:656.30px;top:251.16px;font-size:14.7px;color:#000;letter-spacing:0.101px;">All Commands</span>
<span class="t" style="left:1107.00px;top:225.16px;font-size:14.7px;color:#000;letter-spacing:-0.022px;">Customize <u>Q</u>uick Access Toolbar:</span>
<svg style="left:1325px;top:221.8px;" width="14" height="14" viewBox="0 0 14 14"><circle cx="7" cy="7" r="5.6" fill="#fff" stroke="#5b8ed6" stroke-width="1"/><rect x="6.5" y="6" width="1" height="4.2" fill="#4a7fd0"/><rect x="6.5" y="3.8" width="1" height="1.2" fill="#4a7fd0"/></svg>
<div style="left:1106px;top:245px;width:298px;height:25px;background:#fff;border:1px solid #adadad;box-sizing:border-box;"></div>
<div style="left:1381px;top:246px;width:22px;height:23px;background:#e1e1e1;border:1px solid #adadad;box-sizing:border-box;"></div>
<svg style="left:1387px;top:254px;" width="10" height="7" viewBox="0 0 10 7"><path d="M0.7 0.8L5 5.2L9.3 0.8" stroke="#444" stroke-width="1.1" fill="none"/></svg>
<span class="t" style="left:1109.30px;top:251.16px;font-size:14.7px;color:#000;letter-spacing:0.117px;">For all documents (default)</span>
<div style="left:653px;top:298px;width:329px;height:558px;background:#fff;border:1px solid #828790;box-sizing:border-box;"></div>
<div style="left:960px;top:299px;width:21px;height:556px;background:#f0f0f0;"></div>
<div style="left:961px;top:744px;width:18px;height:21px;background:#cdcdcd;"></div>
<svg style="left:964px;top:306px;" width="12" height="8" viewBox="0 0 12 8"><path d="M1.5 6.2L6 1.7L10.5 6.2" stroke="#505050" stroke-width="1.9" fill="none"/></svg>
<svg style="left:964px;top:839.5px;" width="12" height="8" viewBox="0 0 12 8"><path d="M1.5 1.7L6 6.2L10.5 1.7" stroke="#505050" stroke-width="1.9" fill="none"/></svg>
<div style="left:654px;top:299px;width:306px;height:556px;overflow:hidden;">
<span class="t" style="left:33.50px;top:-2.44px;font-size:14.7px;color:#000;letter-spacing:-0.090px;">Space Before</span>
<span class="t" style="left:33.50px;top:19.56px;font-size:14.7px;color:#000;letter-spacing:-0.161px;">Spacing</span>
<svg style="left:290px;top:21px;" width="6" height="10" viewBox="0 0 6 10"><path d="M0 0L5.5 5L0 10Z" fill="#5a5a5a"/></svg>
<span class="t" style="left:33.50px;top:41.56px;font-size:14.7px;color:#000;letter-spacing:0.158px;">Spacing After</span>
<div style="left:285px;top:38px;width:20px;height:20px;background:#e6e9f5;border:1px solid #a9b1cf;box-sizing:border-box;border-radius:3px;"></div>
<svg style="left:287px;top:41px;" width="8" height="14" viewBox="0 0 8 14"><path d="M1 0.5H3.5M4.5 0.5H7M1 13.5H3.5M4.5 13.5H7M4 0.5V13.5" stroke="#222" stroke-width="1" fill="none"/></svg>
<span class="t" style="left:33.50px;top:63.56px;font-size:14.7px;color:#000;letter-spacing:-0.001px;">Spacing Before</span>
<div style="left:285px;top:60px;width:20px;height:20px;background:#e6e9f5;border:1px solid #a9b1cf;box-sizing:border-box;border-radius:3px;"></div>
<svg style="left:287px;top:63px;" width="8" height="14" viewBox="0 0 8 14"><path d="M1 0.5H3.5M4.5 0.5H7M1 13.5H3.5M4.5 13.5H7M4 0.5V13.5" stroke="#222" stroke-width="1" fill="none"/></svg>
<div style="left:1px;top:81px;width:304px;height:22px;background:#0078d7;"></div>
<span class="t" style="left:33.50px;top:85.56px;font-size:14.7px;color:#fff;transform:scaleX(0.9596);transform-origin:0 0;">Speak</span>
<span class="t" style="left:33.50px;top:107.56px;font-size:14.7px;color:#000;letter-spacing:0.011px;">Specific People</span>
<svg style="left:290px;top:109px;" width="6" height="10" viewBox="0 0 6 10"><path d="M0 0L5.5 5L0 10Z" fill="#5a5a5a"/></svg>
<span class="t" style="left:33.50px;top:129.56px;font-size:14.7px;color:#000;letter-spacing:-0.202px;">Specific Version...</span>
<span class="t" style="left:33.50px;top:151.56px;font-size:14.7px;color:#000;letter-spacing:-0.187px;">Spelling...</span>
<span class="t" style="left:33.50px;top:173.56px;font-size:14.7px;color:#000;letter-spacing:0.087px;">Spelling</span>
<div style="left:287px;top:170px;width:1px;height:20px;background:#9a9a9a;"></div>
<svg style="left:292px;top:175px;" width="6" height="10" viewBox="0 0 6 10"><path d="M0 0L5.5 5L0 10Z" fill="#3c4a90"/></svg>
<span class="t" style="left:33.50px;top:195.56px;font-size:14.7px;color:#000;letter-spacing:0.175px;">Spelling &amp; Grammar</span>
<span class="t" style="left:33.50px;top:217.56px;font-size:14.7px;color:#000;letter-spacing:-0.007px;">Spelling Recheck Document</span>
<span class="t" style="left:33.50px;top:239.56px;font-size:14.7px;color:#000;transform:scaleX(0.9518);transform-origin:0 0;">Spike</span>
<span class="t" style="left:33.50px;top:261.56px;font-size:14.7px;color:#000;letter-spacing:0.062px;">Spin Button (ActiveX Control)</span>
<span class="t" style="left:33.50px;top:283.56px;font-size:14.7px;color:#000;letter-spacing:0.181px;">Split</span>
<span class="t" style="left:33.50px;top:305.56px;font-size:14.7px;color:#000;transform:scaleX(0.9406);transform-origin:0 0;">Split Cells...</span>
<span class="t" style="left:33.50px;top:327.56px;font-size:14.7px;color:#000;letter-spacing:0.124px;">Split Subdocument</span>
<span class="t" style="left:33.50px;top:349.56px;font-size:14.7px;color:#000;letter-spacing:0.222px;">Split Table</span>
<span class="t" style="left:33.50px;top:371.56px;font-size:14.7px;color:#000;transform:scaleX(0.9493);transform-origin:0 0;">Square</span>
<span class="t" style="left:33.50px;top:393.56px;font-size:14.7px;color:#000;letter-spacing:-0.083px;">Standard</span>
<span class="t" style="left:33.50px;top:415.56px;font-size:14.7px;color:#000;letter-spacing:-0.083px;">Standard</span>
<span class="t" style="left:33.50px;top:437.56px;font-size:14.7px;color:#000;letter-spacing:-0.030px;">Start Inking</span>
<span class="t" style="left:33.50px;top:459.56px;font-size:14.7px;color:#000;letter-spacing:0.135px;">Start Mail Merge</span>
<svg style="left:290px;top:461px;" width="6" height="10" viewBox="0 0 6 10"><path d="M0 0L5.5 5L0 10Z" fill="#5a5a5a"/></svg>
<span class="t" style="left:33.50px;top:481.56px;font-size:14.7px;color:#000;letter-spacing:0.135px;">Start Mail Merge</span>
<div style="left:285px;top:478px;width:20px;height:20px;background:#fff;border:1px solid #a9b1cf;box-sizing:border-box;border-radius:4px;"></div>
<div style="left:286px;top:491px;width:18px;height:6px;background:#e3e6f3;border-radius:0 0 3px 3px;"></div>
<svg style="left:292px;top:491px;" width="7" height="4" viewBox="0 0 7 4"><path d="M0 0H7L3.5 4Z" fill="#4a55b5"/></svg>
<span class="t" style="left:33.50px;top:503.56px;font-size:14.7px;color:#000;letter-spacing:-0.026px;">Start Of Column</span>
<span class="t" style="left:33.50px;top:525.56px;font-size:14.7px;color:#000;letter-spacing:-0.038px;">Start Of Doc Extend</span>
<span class="t" style="left:33.50px;top:546.76px;font-size:14.7px;color:#000;letter-spacing:0.149px;">Start of Document</span>
<svg style="left:2px;top:0px;" width="19" height="13" viewBox="0 0 19 13"><path d="M1 3.6H6" stroke="#3e6db5" stroke-width="1.8"/><path d="M4.5 0.6L8.2 3.6L4.5 6.6Z" fill="#3e6db5"/><path d="M0.5 12V8.5H17.5V12" stroke="#666" fill="none" stroke-width="1"/></svg>
<span class="t" style="left:2px;top:15.600000000000023px;font-size:14.4px;color:#555;letter-spacing:-0.7px;">AV</span>
<svg style="left:2px;top:29px;" width="19" height="7" viewBox="0 0 19 7"><path d="M1 3.5H17" stroke="#3e6db5" stroke-width="1.1"/><path d="M4 0.8L1 3.5L4 6.2M14 0.8L17 3.5L14 6.2" stroke="#3e6db5" stroke-width="1.1" fill="none"/></svg>
<svg style="left:1.5px;top:82.5px;" width="20" height="20" viewBox="0 0 20 20"><path d="M3.5 1H15.4A2.5 2.5 0 0 1 17.9 3.5V9.4A2.5 2.5 0 0 1 15.4 11.9H10.5V15.8L11.9 14.7L10.5 11.9H3.5A2.5 2.5 0 0 1 1 9.4V3.5A2.5 2.5 0 0 1 3.5 1Z" fill="#fff" stroke="#e8e8e8" stroke-width="1.1"/><path d="M10.5 11.9V15.8L11.9 14.9" fill="none" stroke="#e8e8e8" stroke-width="1.1"/><path d="M12.5 10.4L19.7 15L12.5 19.6Z" fill="#68a58e"/></svg>
<svg style="left:2px;top:127px;" width="19" height="18" viewBox="0 0 19 18"><rect x="0.5" y="0.5" width="17" height="17" fill="#fff" stroke="#555" stroke-width="1"/><text x="1.6" y="8" font-size="8" fill="#333" font-family="Liberation Sans,sans-serif" letter-spacing="-0.4">1.3</text><text x="1.6" y="16" font-size="8" fill="#333" font-family="Liberation Sans,sans-serif" letter-spacing="-0.4">1.5</text><path d="M14.5 1.8V7.5M12.8 5.6L14.5 7.6L16.2 5.6" stroke="#3e6db5" stroke-width="1" fill="none"/><path d="M14.5 16V10.3M12.8 12.2L14.5 10.2L16.2 12.2" stroke="#3e6db5" stroke-width="1" fill="none"/></svg>
<span class="t" style="left:2px;top:147.60000000000002px;font-size:8px;color:#5a5a5a;letter-spacing:0.45px;">ABC</span>
<svg style="left:2px;top:155px;" width="18" height="13" viewBox="0 0 18 13"><path d="M1.5 6L6.5 11L15.5 1.5" stroke="#3e6db5" stroke-width="3" fill="none"/></svg>
<span class="t" style="left:2px;top:169.60000000000002px;font-size:8px;color:#5a5a5a;letter-spacing:0.45px;">ABC</span>
<svg style="left:2px;top:177px;" width="18" height="13" viewBox="0 0 18 13"><path d="M1.5 6L6.5 11L15.5 1.5" stroke="#3e6db5" stroke-width="3" fill="none"/></svg>
<span class="t" style="left:2px;top:191.60000000000002px;font-size:8px;color:#5a5a5a;letter-spacing:0.45px;">ABC</span>
<svg style="left:2px;top:199px;" width="18" height="13" viewBox="0 0 18 13"><path d="M1.5 6L6.5 11L15.5 1.5" stroke="#3e6db5" stroke-width="3" fill="none"/></svg>
<svg style="left:2px;top:258px;" width="18" height="18" viewBox="0 0 18 18"><rect x="0.5" y="0.5" width="16.5" height="16.5" fill="#fff" stroke="#666" stroke-width="1"/><path d="M5.5 6.5L8.7 3L11.9 6.5Z" fill="#777"/><path d="M5.5 10.5L8.7 14L11.9 10.5Z" fill="#777"/><path d="M3.5 8.5H14" stroke="#8a8a8a" stroke-width="1"/></svg>
<svg style="left:2px;top:282px;" width="18" height="16" viewBox="0 0 18 16"><rect x="0.5" y="0.5" width="16.5" height="15" fill="#fff" stroke="#666" stroke-width="1"/><rect x="0" y="0" width="17.5" height="3.6" fill="#3e6db5"/><path d="M2 9.5H15" stroke="#3e6db5" stroke-width="1" stroke-dasharray="1 1"/></svg>
<svg style="left:2px;top:304px;" width="18" height="16" viewBox="0 0 18 16"><rect x="0.5" y="0.5" width="16.5" height="15" fill="#fff" stroke="#777" stroke-width="1"/><path d="M8.7 0.5V15.5" stroke="#888" stroke-width="1"/><rect x="0.5" y="6" width="16.5" height="3.6" fill="#fff" stroke="#3e6db5" stroke-width="1"/><path d="M3.5 6V9.6M6.5 6V9.6M9.5 6V9.6M12.5 6V9.6" stroke="#3e6db5" stroke-width="1.6"/></svg>
<svg style="left:4px;top:325px;" width="16" height="18" viewBox="0 0 16 18"><rect x="0.5" y="0.5" width="14.5" height="17" fill="#fff" stroke="#666" stroke-width="1"/><path d="M4 8V3.5H9L11.5 6V8M4 10V14.5H11.5V10" stroke="#666" stroke-width="1" fill="none"/><path d="M9 3.5V6H11.5" stroke="#666" stroke-width="0.9" fill="none"/><path d="M5.5 9H10.5" stroke="#666" stroke-width="1" stroke-dasharray="1 1"/></svg>
<svg style="left:2px;top:348px;" width="18" height="16" viewBox="0 0 18 16"><rect x="0.5" y="0.5" width="16.5" height="6" fill="#fff" stroke="#777"/><path d="M0.5 3.5H17M4.7 0.5V6.5M8.8 0.5V6.5M13 0.5V6.5" stroke="#888" stroke-width="0.9"/><rect x="0.5" y="9.5" width="16.5" height="6" fill="#fff" stroke="#777"/><path d="M0.5 12.5H17M4.7 9.5V15.5M8.8 9.5V15.5M13 9.5V15.5" stroke="#888" stroke-width="0.9"/><path d="M0 8H17.5" stroke="#3e6db5" stroke-width="1"/></svg>
<svg style="left:2px;top:369px;" width="19" height="18" viewBox="0 0 19 18"><path d="M0 1.5H18M0 16.5H18" stroke="#3e6db5" stroke-width="1.1"/><path d="M0 5.5H3M0 8.5H3M0 11.5H3M15 5.5H18M15 8.5H18M15 11.5H18" stroke="#3e6db5" stroke-width="1.1"/><path d="M0 14H18" stroke="#3e6db5" stroke-width="1.1"/><path d="M5 12A4 4.6 0 0 1 13 12" stroke="#777" stroke-width="2.4" fill="none"/></svg>
<svg style="left:2px;top:391px;" width="19" height="18" viewBox="0 0 19 18"><path d="M9 6V9.5M4 12.5V9.5H14V12.5" stroke="#666" stroke-width="1" fill="none"/><rect x="5.5" y="0.5" width="7" height="5" rx="0.6" fill="#fff" stroke="#3e6db5"/><rect x="0.5" y="12.5" width="7" height="5" rx="0.6" fill="#fff" stroke="#3e6db5"/><rect x="10.5" y="12.5" width="7" height="5" rx="0.6" fill="#fff" stroke="#3e6db5"/></svg>
<svg style="left:2px;top:413px;" width="19" height="18" viewBox="0 0 19 18"><path d="M9 6V9.5M4 12.5V9.5H14V12.5" stroke="#666" stroke-width="1" fill="none"/><rect x="5.5" y="0.5" width="7" height="5" rx="0.6" fill="#fff" stroke="#3e6db5"/><rect x="0.5" y="12.5" width="7" height="5" rx="0.6" fill="#fff" stroke="#3e6db5"/><rect x="10.5" y="12.5" width="7" height="5" rx="0.6" fill="#fff" stroke="#3e6db5"/></svg>
<svg style="left:1px;top:434px;" width="21" height="20" viewBox="0 0 21 20"><path d="M13.5 5.2A8.3 6.2 0 1 0 18.6 9.2" stroke="#d4532f" stroke-width="1.7" fill="none"/><path d="M19.3 1.4L11.6 10" stroke="#5a5a5a" stroke-width="3.6"/><path d="M12.6 8.4L10.4 11.2L5.6 16.2L8.2 10.8L10.8 7.2Z" fill="#d4532f"/><circle cx="3.2" cy="17.6" r="1.1" fill="#d4532f"/></svg>
<svg style="left:2px;top:457px;" width="19" height="19" viewBox="0 0 19 19"><path d="M0.5 14V0.5H6" stroke="#666" fill="none"/><path d="M2.5 16V2.5H9.5L12.5 5.5V7" stroke="#666" fill="none"/><path d="M9.5 2.5V5.5H12.5" stroke="#666" fill="none" stroke-width="0.9"/><rect x="4.5" y="7.5" width="13.5" height="10" fill="#fff" stroke="#666"/><rect x="14" y="9.5" width="2" height="2" fill="#3e6db5"/><path d="M7 12.5H12M7 14.5H11" stroke="#888" stroke-width="0.9"/></svg>
<svg style="left:2px;top:545.5px;" width="19" height="12" viewBox="0 0 19 12"><path d="M1.5 11V3.5Q1.5 1.5 4.5 2" stroke="#3e6db5" stroke-width="1.1" fill="none"/><path d="M3 0.2L6 2.2L3.3 4Z" fill="#3e6db5"/><path d="M7.5 3.5H17M7.5 6.5H17M7.5 9.5H17" stroke="#666" stroke-width="1"/></svg>
</div>
<div style="left:994px;top:547px;width:100px;height:30px;background:#e1e1e1;border:1px solid #adadad;box-sizing:border-box;"></div>
<span class="t" style="left:1018.00px;top:556.16px;font-size:14.7px;color:#000;transform:scaleX(1.0863);transform-origin:0 0;"><u>A</u>dd &gt;&gt;</span>
<div style="left:994px;top:583px;width:100px;height:30px;background:#cccccc;border:1px solid #bfbfbf;box-sizing:border-box;"></div>
<span class="t" style="left:1006.50px;top:592.16px;font-size:14.7px;color:#838383;letter-spacing:0.001px;">&lt;&lt; <u>R</u>emove</span>
<div style="left:1106px;top:298px;width:298px;height:497px;background:#fff;border:1px solid #828790;box-sizing:border-box;"></div>
<span class="t" style="left:1140.00px;top:305.16px;font-size:14.7px;color:#000;transform:scaleX(0.9252);transform-origin:0 0;">Save</span>
<span class="t" style="left:1140.00px;top:327.16px;font-size:14.7px;color:#000;letter-spacing:0.089px;">Undo</span>
<span class="t" style="left:1140.00px;top:349.16px;font-size:14.7px;color:#000;letter-spacing:-0.161px;">Redo</span>
<span class="t" style="left:1140.00px;top:371.16px;font-size:14.7px;color:#000;transform:scaleX(0.9582);transform-origin:0 0;">Font Size</span>
<span class="t" style="left:1140.00px;top:393.16px;font-size:14.7px;color:#000;transform:scaleX(0.9596);transform-origin:0 0;">Speak</span>
<div style="left:1384px;top:323px;width:1px;height:20px;background:#9a9a9a;"></div>
<svg style="left:1390px;top:328px;" width="6" height="10" viewBox="0 0 6 10"><path d="M0 0L5.5 5L0 10Z" fill="#3c4a90"/></svg>
<div style="left:1382px;top:367px;width:20px;height:20px;background:#e6e9f5;border:1px solid #8d97c0;box-sizing:border-box;border-radius:2px;"></div>
<svg style="left:1384px;top:370px;" width="8" height="14" viewBox="0 0 8 14"><path d="M1 0.5H3.5M4.5 0.5H7M1 13.5H3.5M4.5 13.5H7M4 0.5V13.5" stroke="#222" stroke-width="1" fill="none"/></svg>
<svg style="left:1393px;top:376px;" width="6" height="3" viewBox="0 0 6 3"><path d="M0 0H6L3 3Z" fill="#3c4a90"/></svg>
<svg style="left:1110px;top:303px;" width="16" height="16" viewBox="0 0 16 16"><rect x="0" y="0" width="16" height="16" rx="1.2" fill="#8049a8"/><rect x="1.8" y="0.9" width="12.2" height="8.1" rx="0.9" fill="#fff"/><rect x="3.8" y="10.9" width="7.3" height="4.1" rx="0.8" fill="#fff"/><rect x="5.9" y="11.9" width="2" height="4.1" fill="#8049a8"/></svg>
<svg style="left:1109px;top:326px;" width="18" height="15" viewBox="0 0 18 15"><path d="M5 4.45H12.1A4.55 4.55 0 0 1 12.1 13.55H11" stroke="#4a7ab5" stroke-width="2.7" fill="none"/><path d="M0 4.45L4.4 0H8L5 3.1V5.8L8 8.9H4.4Z" fill="#4a7ab5"/></svg>
<svg style="left:1109.5px;top:346.5px;" width="18" height="17" viewBox="0 0 18 17"><path d="M7.36 2.05A6.55 6.55 0 1 0 14.4 5.4" stroke="#4a7ab5" stroke-width="2.9" fill="none"/><path d="M9.6 0.6L17.4 1.5L10.9 8.2Z" fill="#4a7ab5"/></svg>
<svg style="left:1108.5px;top:389.5px;" width="20" height="20" viewBox="0 0 20 20"><path d="M3.5 1H15.4A2.5 2.5 0 0 1 17.9 3.5V9.4A2.5 2.5 0 0 1 15.4 11.9H10.5V15.8L11.9 14.7L10.5 11.9H3.5A2.5 2.5 0 0 1 1 9.4V3.5A2.5 2.5 0 0 1 3.5 1Z" fill="#fff" stroke="#6a6a6a" stroke-width="1.1"/><path d="M10.5 11.9V15.8L11.9 14.9" fill="none" stroke="#6a6a6a" stroke-width="1.1"/><path d="M12.5 10.4L19.7 15L12.5 19.6Z" fill="#68a58e"/></svg>
<div style="left:1416px;top:548px;width:37px;height:28px;background:#cccccc;border:1px solid #bfbfbf;box-sizing:border-box;"></div>
<div style="left:1416px;top:582px;width:37px;height:28px;background:#cccccc;border:1px solid #bfbfbf;box-sizing:border-box;"></div>
<svg style="left:1430px;top:560px;" width="9" height="5" viewBox="0 0 9 5"><path d="M0 5H9L4.5 0Z" fill="#555"/></svg>
<svg style="left:1430px;top:594px;" width="9" height="5" viewBox="0 0 9 5"><path d="M0 0H9L4.5 5Z" fill="#555"/></svg>
<div style="left:1107px;top:800px;width:86px;height:30px;background:#cccccc;border:1px solid #bfbfbf;box-sizing:border-box;"></div>
<span class="t" style="left:1122.00px;top:809.41px;font-size:14.7px;color:#838383;letter-spacing:0.149px;"><u>M</u>odify...</span>
<span class="t" style="left:1107.00px;top:843.91px;font-size:14.7px;color:#000;letter-spacing:-0.038px;">Customizations:</span>
<div style="left:1224px;top:836px;width:86px;height:28px;background:#e1e1e1;border:1px solid #adadad;box-sizing:border-box;"></div>
<span class="t" style="left:1240.00px;top:843.91px;font-size:14.7px;color:#000;transform:scaleX(0.9453);transform-origin:0 0;">R<u>e</u>set</span>
<svg style="left:1282.5px;top:847px;" width="10" height="6" viewBox="0 0 10 6"><path d="M0 0H10L5 5.5Z" fill="#000"/></svg>
<svg style="left:1311.5px;top:839.3px;" width="14" height="14" viewBox="0 0 14 14"><circle cx="7" cy="7" r="5.6" fill="#fff" stroke="#5b8ed6" stroke-width="1"/><rect x="6.5" y="6" width="1" height="4.2" fill="#4a7fd0"/><rect x="6.5" y="3.8" width="1" height="1.2" fill="#4a7fd0"/></svg>
<div style="left:1224px;top:870px;width:121px;height:28px;background:#e1e1e1;border:1px solid #adadad;box-sizing:border-box;"></div>
<span class="t" style="left:1229.00px;top:878.16px;font-size:14.7px;color:#000;transform:scaleX(1.0654);transform-origin:0 0;">Im<u>p</u>ort/Export</span>
<svg style="left:1329.5px;top:881px;" width="10" height="6" viewBox="0 0 10 6"><path d="M0 0H10L5 5.5Z" fill="#000"/></svg>
<svg style="left:1346.5px;top:873.55px;" width="14" height="14" viewBox="0 0 14 14"><circle cx="7" cy="7" r="5.6" fill="#fff" stroke="#5b8ed6" stroke-width="1"/><rect x="6.5" y="6" width="1" height="4.2" fill="#4a7fd0"/><rect x="6.5" y="3.8" width="1" height="1.2" fill="#4a7fd0"/></svg>
<div style="left:653px;top:870px;width:16px;height:16px;background:#fff;border:1px solid #333;box-sizing:border-box;"></div>
<span class="t" style="left:677.50px;top:871.91px;font-size:14.7px;color:#000;letter-spacing:0.088px;">S<u>h</u>ow Quick Access Toolbar below the Ribbon</span>
<div style="left:1283px;top:919px;width:86px;height:30px;background:#e1e1e1;border:2px solid #0078d7;box-sizing:border-box;"></div>
<span class="t" style="left:1316.30px;top:928.16px;font-size:14.7px;color:#000;transform:scaleX(0.9417);transform-origin:0 0;">OK</span>
<div style="left:1382px;top:919px;width:86px;height:30px;background:#e1e1e1;border:1px solid #adadad;box-sizing:border-box;"></div>
<span class="t" style="left:1403.00px;top:928.16px;font-size:14.7px;color:#000;transform:scaleX(0.9463);transform-origin:0 0;">Cancel</span>
<div style="left:1471px;top:946px;width:3px;height:3px;background:#bfbfbf;"></div>
<div style="left:1471px;top:950px;width:3px;height:3px;background:#bfbfbf;"></div>
<div style="left:1467px;top:950px;width:3px;height:3px;background:#bfbfbf;"></div>
<div style="left:1471px;top:954px;width:3px;height:3px;background:#bfbfbf;"></div>
<div style="left:1467px;top:954px;width:3px;height:3px;background:#bfbfbf;"></div>
<div style="left:1463px;top:954px;width:3px;height:3px;background:#bfbfbf;"></div>
</body></html>
